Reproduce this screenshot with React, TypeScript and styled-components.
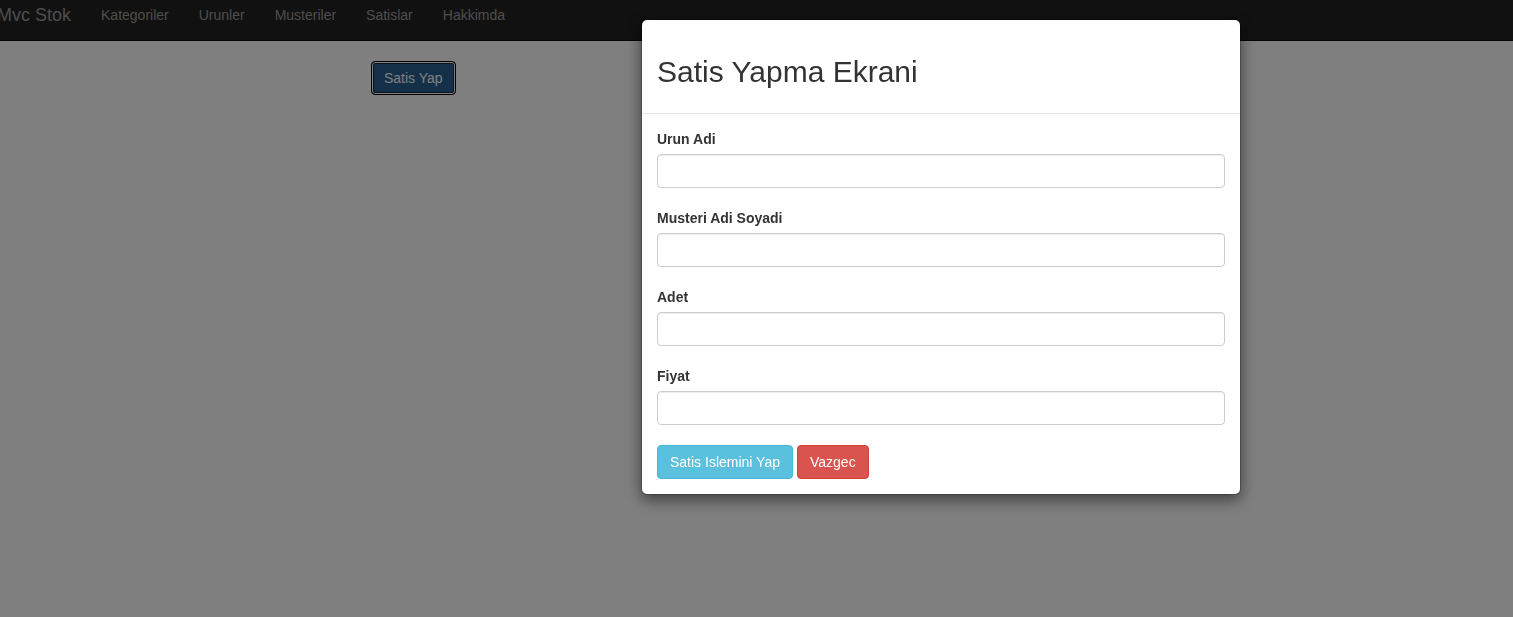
import React from "react";
import styled, { createGlobalStyle } from "styled-components";

const GlobalStyle = createGlobalStyle`
  html, body {
    margin: 0;
    padding: 0;
    background: #fff;
    font-family: "Liberation Sans", Arial, Helvetica, sans-serif;
    font-size: 14px;
    line-height: 1.42857;
    color: #333;
    overflow: hidden;
  }
  * { box-sizing: border-box; }
`;

const Page = styled.div`
  width: 1513px;
  height: 617px;
`;

const Navbar = styled.nav`
  display: flex;
  align-items: flex-start;
  height: 41px;
  padding-top: 5px;
  background: #222;
  border-bottom: 1px solid #080808;
`;

const Brand = styled.a`
  font-size: 18px;
  line-height: 20px;
  color: #9d9d9d;
  margin-left: -3px;
  margin-right: 15px;
  text-decoration: none;
`;

const NavLink = styled.a`
  padding: 0 15px;
  font-size: 14px;
  line-height: 20px;
  color: #9d9d9d;
  text-decoration: none;
`;

const Content = styled.main`
  padding: 20px 0 0 371px;
`;

const PrimaryButton = styled.button`
  font-family: inherit;
  font-size: 14px;
  line-height: 20px;
  padding: 6px 12px;
  color: #fff;
  background: #286090;
  border: 1px solid #000;
  border-radius: 4px;
  box-shadow: inset 0 0 0 1px #fff, inset 0 0 0 2px #122b40;
`;

const Backdrop = styled.div`
  position: fixed;
  inset: 0;
  background: rgba(0, 0, 0, 0.5);
`;

const Modal = styled.div`
  position: fixed;
  top: 19px;
  left: 641px;
  width: 600px;
  background: #fff;
  border: 1px solid rgba(0, 0, 0, 0.2);
  border-radius: 6px;
  box-shadow: 0 5px 15px rgba(0, 0, 0, 0.5);
  background-clip: padding-box;
`;

const ModalHeader = styled.div`
  padding: 15px;
  border-bottom: 1px solid #e5e5e5;
`;

const Title = styled.h2`
  margin: 20px 0 10px;
  font-size: 30px;
  font-weight: 500;
  line-height: 1.1;
  color: #333;
`;

const ModalBody = styled.div`
  padding: 15px;
`;

const FormGroup = styled.div`
  margin-bottom: 20px;
`;

const Label = styled.label`
  display: block;
  margin-bottom: 5px;
  font-weight: bold;
  line-height: 20px;
`;

const Input = styled.input`
  display: block;
  width: 100%;
  height: 34px;
  padding: 6px 12px;
  font-family: inherit;
  font-size: 14px;
  border: 1px solid #ccc;
  border-radius: 4px;
  box-shadow: inset 0 1px 1px rgba(0, 0, 0, 0.075);
`;

const Actions = styled.div`
  display: flex;
  gap: 4px;
`;

const ActionButton = styled.button<{ $variant: "info" | "danger" }>`
  font-family: inherit;
  font-size: 14px;
  line-height: 20px;
  padding: 6px 12px;
  color: #fff;
  border-radius: 4px;
  border: 1px solid ${(p) => (p.$variant === "info" ? "#46b8da" : "#d43f3a")};
  background: ${(p) => (p.$variant === "info" ? "#5bc0de" : "#d9534f")};
`;

const fields = ["Urun Adi", "Musteri Adi Soyadi", "Adet", "Fiyat"];

const App: React.FC = () => {
  return (
    <Page>
      <GlobalStyle />
      <Navbar>
        <Brand>Mvc Stok</Brand>
        <NavLink>Kategoriler</NavLink>
        <NavLink>Urunler</NavLink>
        <NavLink>Musteriler</NavLink>
        <NavLink>Satislar</NavLink>
        <NavLink>Hakkimda</NavLink>
      </Navbar>
      <Content>
        <PrimaryButton>Satis Yap</PrimaryButton>
      </Content>
      <Backdrop />
      <Modal>
        <ModalHeader>
          <Title>Satis Yapma Ekrani</Title>
        </ModalHeader>
        <ModalBody>
          {fields.map((f) => (
            <FormGroup key={f}>
              <Label>{f}</Label>
              <Input />
            </FormGroup>
          ))}
          <Actions>
            <ActionButton $variant="info">Satis Islemini Yap</ActionButton>
            <ActionButton $variant="danger">Vazgec</ActionButton>
          </Actions>
        </ModalBody>
      </Modal>
    </Page>
  );
};

export default App;
